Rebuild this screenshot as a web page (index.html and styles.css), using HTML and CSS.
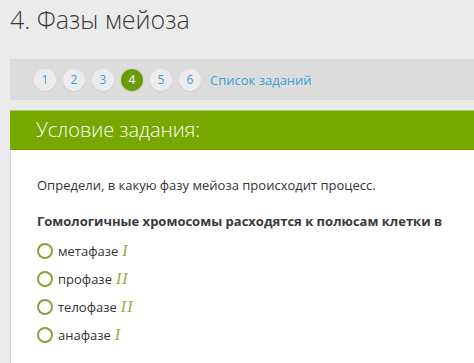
FILE: index.html
```html
<!DOCTYPE html>
<html lang="ru">
<head>
<meta charset="utf-8">
<link rel="stylesheet" href="styles.css">
</head>
<body>
<h1 class="title">4. Фазы мейоза</h1>
<nav class="pager">
  <a class="num">1</a>
  <a class="num">2</a>
  <a class="num">3</a>
  <a class="num active">4</a>
  <a class="num">5</a>
  <a class="num">6</a>
  <a class="list">Список заданий</a>
</nav>
<section class="task">
  <div class="task-head">Условие задания:</div>
  <div class="task-body">
    <p class="intro">Определи, в какую фазу мейоза происходит процесс.</p>
    <p class="question">Гомологичные хромосомы расходятся к полюсам клетки в</p>
    <ul class="options">
      <li><span class="radio"></span>метафазе <i class="rn">I</i></li>
      <li><span class="radio"></span>профазе <i class="rn">II</i></li>
      <li><span class="radio"></span>телофазе <i class="rn">II</i></li>
      <li><span class="radio"></span>анафазе <i class="rn">I</i></li>
    </ul>
  </div>
</section>
</body>
</html>
```
FILE: styles.css
```css
html, body { margin: 0; padding: 0; }
body {
  background: #ebebeb;
  font-family: "Open Sans", sans-serif;
  color: #333;
  padding-left: 10px;
  overflow: hidden;
}
.title {
  margin: 0;
  padding: 2px 0 0 0;
  font-weight: 300;
  font-size: 25px;
  line-height: 34px;
  color: #3a3a3a;
  height: 57px;
}
.pager {
  display: flex;
  align-items: center;
  gap: 7px;
  background: #dcdcdc;
  height: 41px;
  padding-left: 24px;
}
.num {
  width: 22px;
  height: 22px;
  border-radius: 50%;
  background: #ececec;
  box-shadow: 0 1px 1px rgba(0,0,0,0.08);
  color: #3a9fd6;
  font-size: 12px;
  display: flex;
  align-items: center;
  justify-content: center;
}
.num.active {
  background: #6a9c09;
  color: #fff;
}
.list {
  color: #3a9fd6;
  font-size: 13px;
  margin-left: 2px;
}
.task {
  margin-top: 10px;
  background: #fff;
  border-left: 1px solid #d8d8d8;
}
.task-head {
  background: #76a800;
  color: #fff;
  font-weight: 300;
  font-size: 20px;
  height: 38px;
  line-height: 38px;
  padding-left: 26px;
  border-top: 1px solid #a8cc70;
  border-bottom: 1px solid #6a9a00;
  margin-left: -1px;
}
.task-body {
  padding: 25px 0 20px 26px;
  font-size: 13px;
  color: #333;
}
.intro { margin: 0; line-height: 20px; }
.question { margin: 16px 0 0 0; font-weight: 700; line-height: 20px; color: #3a3a3a; }
.options { list-style: none; margin: 6px 0 0 0; padding: 0; }
.options li {
  display: flex;
  align-items: center;
  height: 28px;
}
.radio {
  width: 12px;
  height: 12px;
  border: 2px solid #8ea03a;
  border-radius: 50%;
  margin-right: 5px;
  box-sizing: content-box;
}
.rn {
  font-family: "Liberation Serif", "DejaVu Serif", serif;
  color: #9aaa3a;
  font-size: 16px;
  margin-left: 4px;
  letter-spacing: 1px;
}
```
